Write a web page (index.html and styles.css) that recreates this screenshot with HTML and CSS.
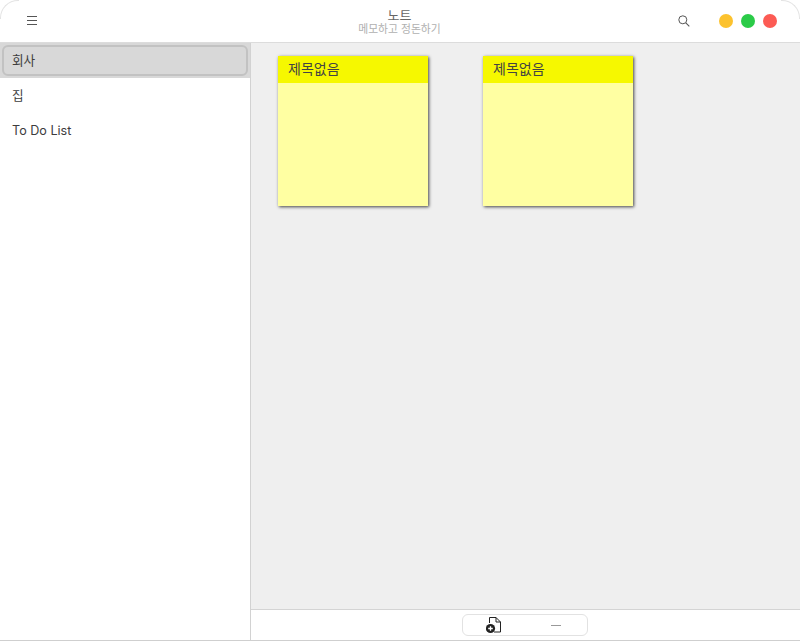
FILE: index.html
```html
<!DOCTYPE html>
<html lang="ko">
<head>
    <meta charset="UTF-8">
    <title>노트</title>
    <link rel="stylesheet" href="styles.css">
</head>
<body>
    <div class="window">
        <div class="titlebar">
            <div class="titlebar__left">
                <svg class="menuIcon" width="12" height="10" viewBox="0 0 12 10">
                    <path d="M1 .5h10M1 4.5h10M1 8.5h10" stroke="#555" stroke-width="1" fill="none"/>
                </svg>
            </div>
            <div class="titlebar__title">
                <div class="appName">노트</div>
                <div class="appSub">메모하고 정돈하기</div>
            </div>
            <div class="titlebar__right">
                <svg class="searchIcon" width="12" height="12" viewBox="0 0 12 12">
                    <circle cx="4.8" cy="4.8" r="4" stroke="#555" stroke-width="1" fill="none"/>
                    <path d="M7.8 7.8l3.5 3.5" stroke="#555" stroke-width="1.1" fill="none"/>
                </svg>
                <div class="winButtons">
                    <span class="winBtn winBtn--min"></span>
                    <span class="winBtn winBtn--max"></span>
                    <span class="winBtn winBtn--close"></span>
                </div>
            </div>
        </div>
        <div class="main">
            <div class="sidebar">
                <div class="sideItem sideItem--active"><span class="sideItem__in">회사</span></div>
                <div class="sideItem"><span class="sideItem__in">집</span></div>
                <div class="sideItem"><span class="sideItem__in sideItem__in--latin">To Do List</span></div>
            </div>
            <div class="content">
                <div class="notes">
                    <div class="note">
                        <div class="note__head">제목없음</div>
                    </div>
                    <div class="note">
                        <div class="note__head">제목없음</div>
                    </div>
                </div>
                <div class="footer">
                    <div class="toolbox">
                        <div class="toolbox__btn">
                            <svg width="16" height="17" viewBox="0 0 16 17">
                                <path d="M3.5 6V.5h6.5l4.5 4.5v10h-6.5" stroke="#222" stroke-width="1" fill="none"/>
                                <path d="M10 .5v4.5h4.5" stroke="#222" stroke-width="1" fill="none"/>
                                <circle cx="4.5" cy="11.5" r="4.6" fill="#222"/>
                                <path d="M2.2 11.5h4.6M4.5 9.2v4.6" stroke="#fff" stroke-width="1.3"/>
                            </svg>
                        </div>
                        <div class="toolbox__btn">
                            <span class="minusIcon"></span>
                        </div>
                    </div>
                </div>
            </div>
        </div>
    </div>
</body>
</html>
```

FILE: styles.css
```css
* {
    box-sizing: border-box;
    margin: 0px;
    padding: 0px;
}
html, body {
    height: 100%;
    background-color: #fff;
    overflow: hidden;
}
body {
    font-family: "Inter", "Noto Sans CJK KR", sans-serif;
    color: #333;
}
.window {
    height: 641px;
    position: relative;
    display: flex;
    flex-direction: column;
    background-color: #fff;
    border-bottom: 1px solid #cfcfcf;
    overflow: hidden;
}
/* window corners */
.window::before, .window::after {
    content: "";
    position: absolute;
    top: 0px;
    width: 18px;
    height: 18px;
    border-top: 1px solid #e4e4e4;
}
.window::before {
    left: 0px;
    border-left: 1px solid #e4e4e4;
    border-top-left-radius: 18px;
}
.window::after {
    right: 0px;
    border-right: 1px solid #e4e4e4;
    border-top-right-radius: 18px;
}
.titlebar {
    height: 43px;
    flex: none;
    display: flex;
    align-items: center;
    justify-content: space-between;
    border-bottom: 1px solid #dcdcdc;
    background-color: #fff;
}
.titlebar__left {
    width: 200px;
    padding-left: 26px;
    display: flex;
    align-items: center;
}
.titlebar__title {
    text-align: center;
    padding-right: 1px;
    font-family: "Noto Sans CJK KR", sans-serif;
}
.appName {
    font-size: 13px;
    line-height: 14px;
    color: #666;
}
.appSub {
    font-size: 10.8px;
    line-height: 12px;
    color: #b0b0b0;
}
.titlebar__right {
    width: 200px;
    display: flex;
    justify-content: flex-end;
    align-items: center;
    padding-right: 23px;
}
.searchIcon {
    margin-right: 29px;
}
.winButtons {
    display: flex;
    gap: 8px;
}
.winBtn {
    width: 14px;
    height: 14px;
    border-radius: 50%;
}
.winBtn--min {
    background-color: #fcc22e;
}
.winBtn--max {
    background-color: #2bcb48;
}
.winBtn--close {
    background-color: #fc5b54;
}
.main {
    flex: 1;
    display: flex;
    min-height: 0;
}
.sidebar {
    width: 251px;
    flex: none;
    background-color: #fff;
    border-right: 1px solid #d2d2d2;
    font-size: 12.6px;
}
.sideItem {
    height: 35px;
    padding: 2px;
    display: flex;
}
.sideItem__in {
    flex: 1;
    display: flex;
    align-items: center;
    padding-left: 8px;
    padding-bottom: 2px;
    border: 2px solid transparent;
    border-radius: 6px;
    color: #3d3d3d;
}
.sideItem__in--latin {
    padding-bottom: 0px;
}
.sideItem--active {
    background-color: #d8d8d8;
}
.sideItem--active .sideItem__in {
    border-color: #c2c2c2;
}
.content {
    flex: 1;
    display: flex;
    flex-direction: column;
    min-width: 0;
}
.notes {
    flex: 1;
    background-color: #efefef;
    padding: 13px 27px;
    display: flex;
    align-items: flex-start;
    gap: 55px;
}
.note {
    width: 150px;
    height: 150px;
    background-color: #ffffa2;
    box-shadow: 1px 1px 3px #444;
}
.note__head {
    height: 27px;
    padding-left: 10px;
    background-color: #f6f800;
    color: #444;
    font-size: 14px;
    line-height: 25px;
    font-family: "Noto Sans CJK KR", sans-serif;
}
.footer {
    height: 31px;
    flex: none;
    border-top: 1px solid #d4d4d4;
    background-color: #fff;
    display: flex;
    justify-content: center;
    align-items: center;
}
.toolbox {
    width: 126px;
    height: 22px;
    margin-right: 1px;
    border: 1px solid #e2e2e2;
    border-radius: 6px;
    display: flex;
}
.toolbox__btn {
    flex: 1;
    display: flex;
    justify-content: center;
    align-items: center;
}
.minusIcon {
    width: 10px;
    height: 1px;
    background-color: #999;
}
```
